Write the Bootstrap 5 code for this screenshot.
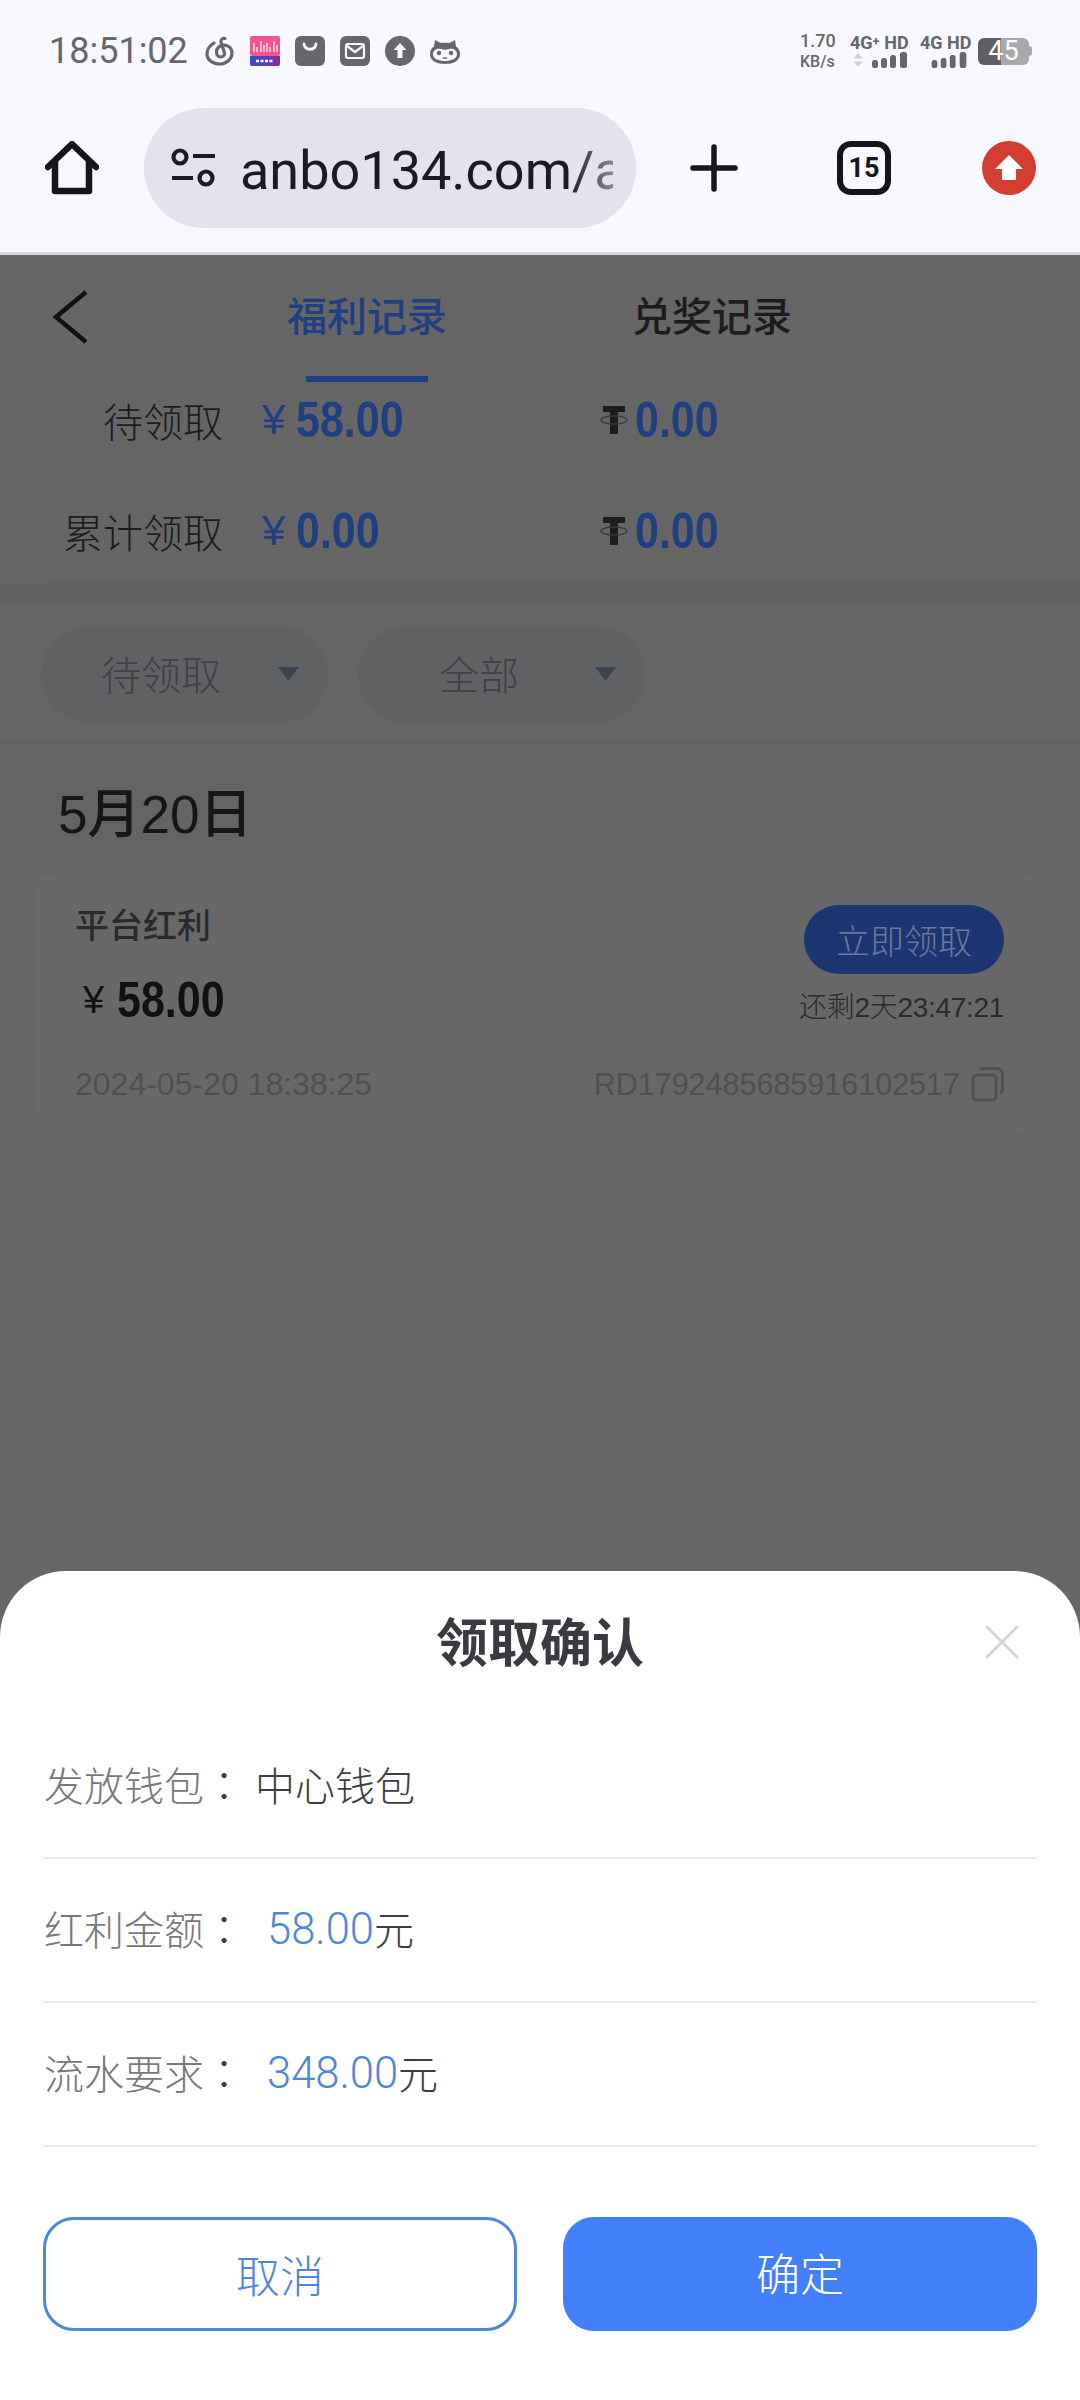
<!-- index.html -->
<!DOCTYPE html>
<html lang="zh-CN">
<head>
  <meta charset="UTF-8">
  <title>领取确认</title>
  <link href="https://cdn.jsdelivr.net/npm/bootstrap@5.3.0/dist/css/bootstrap.min.css" rel="stylesheet">
  <style>
    body {
      margin: 0;
      width: 1080px;
      height: 2400px;
      overflow: hidden;
      background: #666;
      font-family: "Liberation Sans", "Noto Sans CJK SC", sans-serif;
    }
    svg { display: block; flex: none; }
    .screen { width: 1080px; height: 2400px; }

    /* phone status bar */
    .status-bar { height: 102px; padding: 0 48px 0 49px; background: #f8f8ff; color: #66666b; }
    .clock { font: 400 36px/1 Roboto, sans-serif; width: 156px; }
    .status-icons { gap: 15px; }
    .net-speed { font: 500 18px/1 Roboto, sans-serif; width: 50px; }
    .net-speed div + div { font-size: 16px; margin-top: 4px; }
    .sim { font: 700 18px/15px Roboto, sans-serif; white-space: nowrap; }
    .sim-one { width: 58px; margin-right: 12px; }
    .sim-two { width: 48px; margin-right: 10px; }
    .sim svg { margin: 2px 0 0 auto; }
    .sim-sup { font-size: 13px; top: -3px; }
    .battery { width: 51px; height: 27px; border-radius: 6px; background: linear-gradient(90deg, #5f5f63 45%, #a9a9ad 45%); color: #fff; font: 400 27px/27px Roboto, sans-serif; text-align: center; }
    .battery-nub { width: 3px; height: 10px; background: #a9a9ad; border-radius: 0 3px 3px 0; }

    /* browser toolbar */
    .tool-bar { height: 153px; padding: 6px 0 24px 45px; background: #f8f8ff; border-bottom: 3px solid #d9d9dc; }
    .url-pill { width: 492px; height: 120px; margin: 0 54px 0 45px; padding-left: 27px; background: #e2e3ee; border-radius: 60px; color: #1c1b22; }
    .url-text { width: 373px; margin-left: 25px; padding-top: 5px; overflow: hidden; white-space: nowrap; font: 400 54px/1.1 Roboto, sans-serif; -webkit-mask-image: linear-gradient(90deg, #000 88%, rgba(0,0,0,.45) 100%); }
    .tab-count { width: 54px; height: 54px; margin: 0 91px 0 99px; border: 6px solid #15151a; border-radius: 14px; color: #15151a; font: 700 27px/1 Roboto, sans-serif; }

    /* page under the sheet, already dimmed */
    .page-head { height: 127px; padding-left: 52px; }
    .back-icon { margin-top: 35px; }
    .page-tab { width: 160px; height: 127px; padding-top: 35px; font: 500 40px/48px "Noto Sans CJK SC", sans-serif; color: #1c1c1e; }
    .page-tab-first { margin-left: 199px; color: #203f80; }
    .page-tab-second { margin-left: 185px; }
    .tab-line { width: 122px; height: 6px; margin-top: auto; background: #203f80; }
    .sum-row { margin-left: 50px; border-bottom: 1px solid #636363; color: #1c1c1e; }
    .sum-first { height: 95px; padding-bottom: 19px; }
    .sum-second { height: 106px; padding-top: 2px; }
    .sum-label { width: 173px; text-align: right; font: 300 40px/1 "Noto Sans CJK SC", sans-serif; margin-right: 39px; }
    .sum-cell { width: 338px; }
    .money { color: #203f80; }
    .yen { font: 400 42px/1 "Liberation Sans", sans-serif; width: 34px; }
    .num { display: inline-block; transform: scaleX(.86); transform-origin: left center; font: 700 50px/1 "Liberation Sans", sans-serif; }
    .usdt-cell svg { margin-right: 7px; }
    .gap-band { height: 19px; background: #626262; }
    .filter-bar { height: 142px; padding: 24px 0 0 41px; gap: 30px; border-bottom: 1px solid #5f5f5f; }
    .filter-pill { width: 287px; height: 97px; padding-bottom: 4px; border-radius: 49px; background: #616264; color: #3f4146; font: 300 40px/1 "Noto Sans CJK SC", sans-serif; }
    .filter-first { padding-left: 60px; }
    .filter-second { padding-left: 81px; }
    .filter-pill svg { margin-top: 3px; }
    .filter-first svg { margin-left: 57px; }
    .filter-second svg { margin-left: 76px; }
    .date-band { height: 129px; padding: 11px 0 0 58px; background: #636564; color: #161616; font: 500 53px/1 "Liberation Sans", "Noto Sans CJK SC", sans-serif; }
    .bonus-card { margin: 0 37px 0 36px; height: 260px; padding: 29px 39px 0 39px; background: #686868; border-radius: 20px; }
    .bonus-title { font: 500 34px/44px "Noto Sans CJK SC", sans-serif; color: #2a2a2d; }
    .bonus-amount { margin: 29px 0 0 8px; height: 50px; color: #111; }
    .bonus-amount .yen { font-size: 38px; }
    .claim-btn { width: 200px; height: 69px; margin-top: 3px; padding: 0; border: 0; border-radius: 35px; background: #1a356f; color: #6b7a9a; font: 300 34px/66px "Noto Sans CJK SC", sans-serif; }
    .claim-btn:hover { background: #1a356f; color: #6b7a9a; }
    .left-time { margin-top: 14px; font: 300 28px/40px "Liberation Sans", "Noto Sans CJK SC", sans-serif; color: #2a2a2a; letter-spacing: -.3px; }
    .bonus-foot { margin-top: 36px; font: 400 32px/40px "Liberation Sans", sans-serif; color: #505050; }
    .bonus-no { gap: 11px; font-size: 30.5px; }

    /* bottom sheet */
    .sheet { height: 829px; background: #fff; border-radius: 66px 66px 0 0; padding: 0 43px; }
    .sheet-head { height: 144px; margin: 0 -43px; padding-bottom: 6px; display: grid; grid-template-columns: 1fr auto 1fr; align-items: center; }
    .sheet-title { font: 700 52px/1 "Noto Sans CJK SC", sans-serif; color: #3a3a40; }
    .sheet-close { justify-self: end; margin: 3px 61px 0 0; }
    .sheet-row { height: 144px; padding: 0 0 5px 1px; border-bottom: 2px solid #ececec; font: 300 40px/1 "Noto Sans CJK SC", sans-serif; color: #3d3d44; }
    .sheet-label { color: #77777d; width: 160px; }
    .sheet-colon { font-family: "Noto Sans CJK TC", sans-serif; color: #3d3d44; width: 40px; margin-right: 23px; }
    .sheet-row-one .sheet-colon { margin-right: 11px; }
    .sheet-val { margin-top: 4px; font: 300 43.5px/1 Roboto, sans-serif; color: #4f86dd; }
    .sheet-btns { margin-top: 70px; }
    .sheet-btn { width: 474px; height: 114px; padding: 0; border-radius: 31px; font: 300 44px/1 "Noto Sans CJK SC", sans-serif; }
    .btn-cancel { border: 3px solid #4f86dd; background: #fff; color: #4f86dd; }
    .btn-ok { padding-bottom: 4px; border: 0; background: #4280fb; color: #fff; }
  </style>
</head>
<body>
  <div class="screen d-flex flex-column">

    <div class="status-bar d-flex align-items-center">
      <div class="clock">18:51:02</div>
      <div class="status-icons d-flex">
        <svg width="30" height="30" viewBox="0 0 30 30" fill="none" stroke="#66666b" stroke-width="3.2" stroke-linecap="round" stroke-linejoin="round"><path d="M9 7C4 10 2 14 2 18 2 24 8 28 14.500 28 21.500 28 27 23 27 17 27 12 23 9 19 9 15 9 11.500 12 11.500 16 11.500 19 13.500 21 16 21 18 21 20 19 19.500 17L16 6C15.500 3.500 17.500 2 20 2.500"/></svg>
        <svg width="30" height="30" viewBox="0 0 30 30">
          <defs><linearGradient id="biliBottom" x1="0" x2="1"><stop offset="0" stop-color="#2f4fd0"/><stop offset="1" stop-color="#8d2aa0"/></linearGradient></defs>
          <rect width="30" height="20" rx="2" fill="#f2568f"/>
          <path d="M0 20H30V28a2 2 0 0 1-2 2H2a2 2 0 0 1-2-2Z" fill="url(#biliBottom)"/>
          <path d="M4 7V16M7 11V16M11 5V16M14 9V16M17 7V16M20 11V16M24 5V16M27 9V16" stroke="#fff" stroke-width="1.200"/>
          <path d="M6 25H24" stroke="#fff" stroke-width="2.500" stroke-dasharray="3 1.500"/>
        </svg>
        <svg width="30" height="30" viewBox="0 0 30 30" fill="none"><rect width="30" height="30" rx="6" fill="#66666b"/><path d="M9 8C10 15 20 15 21 8" stroke="#f8f8ff" stroke-width="2.800" stroke-linecap="round"/></svg>
        <svg width="30" height="30" viewBox="0 0 30 30" fill="none"><rect width="30" height="30" rx="6" fill="#66666b"/><rect x="6" y="8" width="18" height="14" rx="2" stroke="#f8f8ff" stroke-width="2.200"/><path d="M7 10L15 16 23 10" stroke="#f8f8ff" stroke-width="2.200"/></svg>
        <svg width="30" height="30" viewBox="0 0 30 30"><circle cx="15" cy="15" r="15" fill="#66666b"/><path d="M15 7L21.500 14H17.500V22H12.500V14H8.500Z" fill="#f8f8ff"/></svg>
        <svg width="30" height="30" viewBox="0 0 30 30"><path d="M5 4L10.500 7C13 6.500 17 6.500 19.500 7L25 4 26 10.500C29 12.500 30 15 30 18 30 25 23 28 15 28 7 28 0 25 0 18 0 15 1 12.500 4 10.500Z" fill="#66666b"/><path d="M3 18C3 14 7 12 11 13 14 14 16 14 19 13 23 12 27 14 27 18 27 23 21 25 15 25 9 25 3 23 3 18Z" fill="#f8f8ff"/><circle cx="9" cy="17" r="2.200" fill="#66666b"/><circle cx="21" cy="17" r="2.200" fill="#66666b"/><path d="M13 21.500C14 22.500 16 22.500 17 21.500" stroke="#66666b" stroke-width="1.400" fill="none"/></svg>
      </div>
      <div class="ms-auto d-flex align-items-center">
        <div class="net-speed"><div>1.70</div><div>KB/s</div></div>
        <div class="sim sim-one">
          <div>4G<sup class="sim-sup">+</sup> HD</div>
          <div class="d-flex align-items-end">
            <svg width="58" height="16" viewBox="0 0 58 16"><path d="M8 1L12.500 6.500H3.500ZM8 15L3.500 9.500H12.500Z" fill="#cfcfd4"/><rect x="22" y="8" width="6" height="8" rx="2.500" fill="#66666b"/><rect x="31" y="6" width="6" height="10" rx="2.500" fill="#66666b"/><rect x="40" y="3" width="6" height="13" rx="2.500" fill="#66666b"/><rect x="50" y="0" width="7" height="16" rx="2.500" fill="#66666b"/></svg>
          </div>
        </div>
        <div class="sim sim-two">
          <div>4G HD</div>
          <div class="d-flex align-items-end">
            <svg width="48" height="16" viewBox="0 0 58 16" preserveAspectRatio="none"><rect x="14" y="8" width="7" height="8" rx="2.500" fill="#66666b"/><rect x="25" y="6" width="7" height="10" rx="2.500" fill="#66666b"/><rect x="36" y="3" width="7" height="13" rx="2.500" fill="#66666b"/><rect x="48" y="0" width="8" height="16" rx="2.500" fill="#66666b"/></svg>
          </div>
        </div>
        <div class="battery">45</div>
        <div class="battery-nub"></div>
      </div>
    </div>

    <div class="tool-bar d-flex align-items-center">
      <svg width="54" height="54" viewBox="0 0 54 54" fill="none" stroke="#15151a" stroke-width="6.500" stroke-linecap="round" stroke-linejoin="round"><path d="M3 26L27 3 51 26"/><path d="M10 21V50H44V21"/></svg>
      <div class="url-pill d-flex align-items-center">
        <svg width="44" height="40" viewBox="0 0 44 40" fill="none" stroke="#1c1b22" stroke-width="4.200"><circle cx="9" cy="9" r="6.500"/><path d="M22 8H44M1 30H22"/><circle cx="35" cy="30" r="6.500"/></svg>
        <div class="url-text">anbo134.com/a</div>
      </div>
      <svg width="48" height="48" viewBox="0 0 48 48" stroke="#15151a" stroke-width="5.500" stroke-linecap="round"><path d="M24 3V45M3 24H45"/></svg>
      <div class="tab-count d-flex align-items-center justify-content-center">15</div>
      <svg width="54" height="54" viewBox="0 0 54 54"><circle cx="27" cy="27" r="27" fill="#d23f31"/><path d="M27 14L41 28H34V39H20V28H13Z" fill="#fff"/></svg>
    </div>

    <div class="page-head d-flex">
      <svg class="back-icon align-self-start" width="36" height="54" viewBox="0 0 36 54" fill="none" stroke="#111" stroke-width="4.500"><path d="M34 2L4 27 34 52"/></svg>
      <div class="page-tab page-tab-first d-flex flex-column align-items-center">福利记录<span class="tab-line"></span></div>
      <div class="page-tab page-tab-second">兑奖记录</div>
    </div>

    <div class="sum-row sum-first d-flex align-items-center">
      <div class="sum-label">待领取</div>
      <div class="sum-cell money d-flex align-items-center"><span class="yen">¥</span><span class="num">58.00</span></div>
      <div class="usdt-cell money d-flex align-items-center">
        <svg width="28" height="28" viewBox="0 0 28 28" fill="none"><path d="M3 0H25V6H18V28H10V6H3Z" fill="#1d1d1f"/><ellipse cx="14" cy="14" rx="13" ry="4" stroke="#3a3a3c" stroke-width="1.300"/></svg>
        <span class="num">0.00</span>
      </div>
    </div>
    <div class="sum-row sum-second d-flex align-items-center">
      <div class="sum-label">累计领取</div>
      <div class="sum-cell money d-flex align-items-center"><span class="yen">¥</span><span class="num">0.00</span></div>
      <div class="usdt-cell money d-flex align-items-center">
        <svg width="28" height="28" viewBox="0 0 28 28" fill="none"><path d="M3 0H25V6H18V28H10V6H3Z" fill="#1d1d1f"/><ellipse cx="14" cy="14" rx="13" ry="4" stroke="#3a3a3c" stroke-width="1.300"/></svg>
        <span class="num">0.00</span>
      </div>
    </div>

    <div class="gap-band"></div>

    <div class="filter-bar d-flex">
      <div class="filter-pill filter-first d-flex align-items-center">待领取<svg width="21" height="14" viewBox="0 0 21 14"><path d="M0 0H21L10.500 14Z" fill="#3a4450"/></svg></div>
      <div class="filter-pill filter-second d-flex align-items-center">全部<svg width="21" height="14" viewBox="0 0 21 14"><path d="M0 0H21L10.500 14Z" fill="#3a4450"/></svg></div>
    </div>

    <div class="date-band d-flex align-items-center">5月20日</div>

    <div class="bonus-card">
      <div class="d-flex justify-content-between">
        <div>
          <div class="bonus-title">平台红利</div>
          <div class="bonus-amount d-flex align-items-center"><span class="yen">¥</span><span class="num">58.00</span></div>
        </div>
        <div class="d-flex flex-column align-items-end">
          <button type="button" class="btn claim-btn">立即领取</button>
          <div class="left-time">还剩2天23:47:21</div>
        </div>
      </div>
      <div class="bonus-foot d-flex justify-content-between align-items-center">
        <span>2024-05-20 18:38:25</span>
        <span class="bonus-no d-flex align-items-center">RD1792485685916102517
          <svg width="33" height="35" viewBox="0 0 33 35" fill="none" stroke="#515151" stroke-width="3"><rect x="2" y="8" width="23" height="25" rx="4"/><path d="M9 3.500C10 2 11 1.500 13 1.500H26C29 1.500 31.500 4 31.500 7V22C31.500 24 30.500 25.500 29 26"/></svg>
        </span>
      </div>
    </div>

    <div class="sheet mt-auto">
      <div class="sheet-head">
        <span></span>
        <div class="sheet-title">领取确认</div>
        <svg class="sheet-close" width="34" height="34" viewBox="0 0 34 34" stroke="#d5d5d5" stroke-width="3" stroke-linecap="round"><path d="M2 2L32 32M32 2L2 32"/></svg>
      </div>
      <div class="sheet-row sheet-row-one d-flex align-items-center"><span class="sheet-label">发放钱包</span><span class="sheet-colon">：</span><span>中心钱包</span></div>
      <div class="sheet-row d-flex align-items-center"><span class="sheet-label">红利金额</span><span class="sheet-colon">：</span><span class="sheet-val">58.00</span><span>元</span></div>
      <div class="sheet-row d-flex align-items-center"><span class="sheet-label">流水要求</span><span class="sheet-colon">：</span><span class="sheet-val">348.00</span><span>元</span></div>
      <div class="sheet-btns d-flex justify-content-between">
        <button type="button" class="btn sheet-btn btn-cancel">取消</button>
        <button type="button" class="btn sheet-btn btn-ok">确定</button>
      </div>
    </div>

  </div>
</body>
</html>
